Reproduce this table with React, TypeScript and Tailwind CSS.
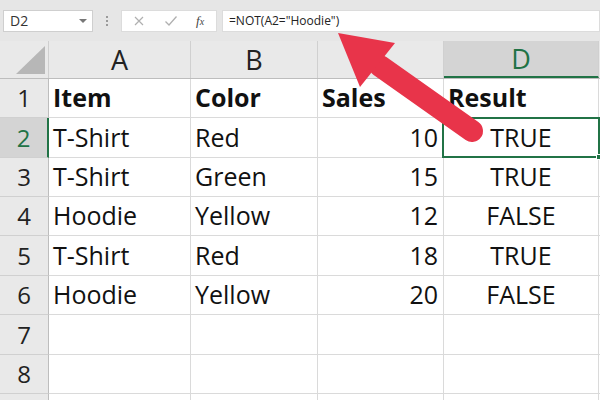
import React from "react";

const rows = [
  { n: "1", h: "h-[39px]", a: "Item", b: "Color", c: "Sales", d: "Result", bold: true },
  { n: "2", h: "h-[40px]", a: "T-Shirt", b: "Red", c: "10", d: "TRUE", sel: true },
  { n: "3", h: "h-[39px]", a: "T-Shirt", b: "Green", c: "15", d: "TRUE" },
  { n: "4", h: "h-[39px]", a: "Hoodie", b: "Yellow", c: "12", d: "FALSE" },
  { n: "5", h: "h-[40px]", a: "T-Shirt", b: "Red", c: "18", d: "TRUE" },
  { n: "6", h: "h-[39px]", a: "Hoodie", b: "Yellow", c: "20", d: "FALSE" },
  { n: "7", h: "h-[40px]", a: "", b: "", c: "", d: "" },
  { n: "8", h: "h-[39px]", a: "", b: "", c: "", d: "" },
  { n: "", h: "h-[39px]", a: "", b: "", c: "", d: "" },
];

export default function App() {
  return (
    <div className="relative w-[600px] h-[400px] overflow-hidden bg-white font-['Open_Sans',sans-serif] text-[#111]">
      {/* top formula bar */}
      <div className="h-[41px] bg-[#e6e6e6] flex items-center">
        <div className="ml-[3px] w-[90px] h-[22px] bg-white border border-[#cfcfcf] flex items-center justify-between pl-[6px] pr-[5px]">
          <span className="text-[14px] text-[#333] leading-none">D2</span>
          <span className="w-0 h-0 border-l-[4px] border-r-[4px] border-t-[4px] border-l-transparent border-r-transparent border-t-[#777]" />
        </div>
        <div className="ml-[13px] w-[3px] flex flex-col gap-[2px]">
          <span className="w-[2px] h-[2px] bg-[#9a9a9a]" />
          <span className="w-[2px] h-[2px] bg-[#9a9a9a]" />
          <span className="w-[2px] h-[2px] bg-[#9a9a9a]" />
        </div>
        <div className="ml-[12px] w-[96px] h-[22px] bg-white border border-[#dcdcdc] flex items-center">
          <svg width="12" height="12" viewBox="0 0 12 12" className="ml-[11px]">
            <path d="M2 2 L10 10 M10 2 L2 10" stroke="#b0b0b0" strokeWidth="1.2" fill="none" />
          </svg>
          <svg width="14" height="12" viewBox="0 0 14 12" className="ml-[19px]">
            <path d="M1.5 6.5 L5 10 L12.5 1.5" stroke="#b0b0b0" strokeWidth="1.3" fill="none" />
          </svg>
          <span className="ml-[18px] font-['Liberation_Serif',serif] italic text-[13px] text-[#444] leading-none">
            f<span className="text-[10px]">x</span>
          </span>
        </div>
        <div className="ml-[5px] flex-1 h-[22px] bg-white border border-[#dcdcdc] flex items-center pl-[6px]">
          <span className="text-[12px] text-[#222] leading-none">=NOT(A2="Hoodie")</span>
        </div>
      </div>

      {/* column header */}
      <div className="flex h-[38px] bg-[#e9e9e9] border-b border-[#bdbdbd]">
        <div className="w-[49px] shrink-0 border-r border-[#cfcfcf] relative">
          <svg width="49" height="37" className="absolute left-0 top-0">
            <polygon points="16,33 45,33 45,5" fill="#b7b7b7" />
          </svg>
        </div>
        <div className="w-[142px] shrink-0 border-r border-[#d0d0d0] flex items-center justify-center text-[27px] text-[#222] leading-none">A</div>
        <div className="w-[127px] shrink-0 border-r border-[#d0d0d0] flex items-center justify-center text-[27px] text-[#222] leading-none">B</div>
        <div className="w-[126px] shrink-0 border-r border-[#d0d0d0] flex items-center justify-center text-[27px] text-[#222] leading-none"></div>
        <div className="w-[155px] shrink-0 border-r border-[#d0d0d0] bg-[#d4d4d4] border-b-2 border-b-[#217346] flex items-center justify-center text-[27px] text-[#217346] leading-none">D</div>
        <div className="flex-1" />
      </div>

      {/* grid rows */}
      {rows.map((r, i) => (
        <div key={i} className={`flex ${r.h}`}>
          <div
            className={`w-[49px] shrink-0 border-b border-[#d0d0d0] flex items-end justify-center pb-[3px] text-[24px] leading-none ${
              r.sel ? "bg-[#d4d4d4] text-[#217346] border-r-2 border-r-[#217346]" : "bg-[#e9e9e9] text-[#222] border-r border-r-[#bdbdbd]"
            }`}
          >
            <span className="mb-[4px]">{r.n}</span>
          </div>
          <div className={`w-[142px] shrink-0 border-b border-r border-[#dadada] flex items-end pl-[4px] pb-[7px] text-[25px] leading-none ${r.bold ? "font-bold" : ""}`}>
            {r.a}
          </div>
          <div className={`w-[127px] shrink-0 border-b border-r border-[#dadada] flex items-end pl-[4px] pb-[7px] text-[25px] leading-none ${r.bold ? "font-bold" : ""}`}>
            {r.b}
          </div>
          <div
            className={`w-[126px] shrink-0 border-b border-r border-[#dadada] flex items-end pb-[7px] text-[25px] leading-none ${
              r.bold ? "font-bold pl-[4px]" : "justify-end pr-[5px]"
            }`}
          >
            {r.c}
          </div>
          <div
            className={`w-[155px] shrink-0 border-b border-r border-[#dadada] flex items-end pb-[7px] text-[25px] leading-none ${
              r.bold ? "font-bold pl-[4px]" : "justify-center"
            }`}
          >
            {r.d}
          </div>
          <div className="flex-1 border-b border-[#dadada]" />
        </div>
      ))}

      {/* selection box on D2 */}
      <div className="absolute left-[442px] top-[117px] w-[158px] h-[41px] border-2 border-[#217346] pointer-events-none" />
      <div className="absolute left-[596px] top-[154px] w-[6px] h-[6px] bg-[#217346] border border-white" />

      {/* red arrow */}
      <svg className="absolute left-0 top-0 pointer-events-none" width="600" height="400">
        <line x1="380" y1="66" x2="472" y2="131" stroke="#e8344a" strokeWidth="22" strokeLinecap="round" />
        <polygon points="338,33 395,43 360,87" fill="#e8344a" />
      </svg>
    </div>
  );
}
